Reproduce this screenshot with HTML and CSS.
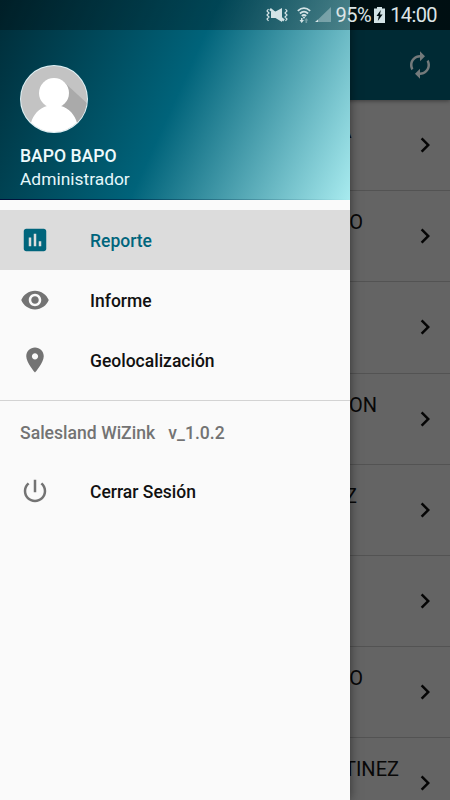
FILE: index.html
```html
<!DOCTYPE html>
<html lang="es">
<head>
<meta charset="utf-8">
<title>Salesland WiZink</title>
<link rel="stylesheet" href="styles.css">
</head>
<body>
<div class="screen">
  <main class="page">
    <header class="appbar">
      <svg class="sync" viewBox="0 0 24 24"><path d="M12 6v3l4-4-4-4v3c-4.42 0-8 3.58-8 8 0 1.57.46 3.03 1.24 4.26L6.7 14.8c-.45-.83-.7-1.79-.7-2.8 0-3.31 2.69-6 6-6zm6.76 1.74L17.3 9.2c.44.84.7 1.79.7 2.8 0 3.31-2.69 6-6 6v-3l-4 4 4 4v-3c4.42 0 8-3.58 8-8 0-1.57-.46-3.03-1.24-4.26z"/></svg>
    </header>
    <ul class="list">
      <li class="row"><span class="name name-a">A</span><svg class="chevron" viewBox="0 0 24 24"><path d="M8.6 16.6 13.2 12 8.6 7.4 10 6l6 6-6 6z"/></svg></li>
      <li class="row"><span class="name name-b">O</span><svg class="chevron" viewBox="0 0 24 24"><path d="M8.6 16.6 13.2 12 8.6 7.4 10 6l6 6-6 6z"/></svg></li>
      <li class="row"><span class="name"></span><svg class="chevron" viewBox="0 0 24 24"><path d="M8.6 16.6 13.2 12 8.6 7.4 10 6l6 6-6 6z"/></svg></li>
      <li class="row"><span class="name name-c">ON</span><svg class="chevron" viewBox="0 0 24 24"><path d="M8.6 16.6 13.2 12 8.6 7.4 10 6l6 6-6 6z"/></svg></li>
      <li class="row"><span class="name name-d">Z</span><svg class="chevron" viewBox="0 0 24 24"><path d="M8.6 16.6 13.2 12 8.6 7.4 10 6l6 6-6 6z"/></svg></li>
      <li class="row"><span class="name"></span><svg class="chevron" viewBox="0 0 24 24"><path d="M8.6 16.6 13.2 12 8.6 7.4 10 6l6 6-6 6z"/></svg></li>
      <li class="row"><span class="name name-b">O</span><svg class="chevron" viewBox="0 0 24 24"><path d="M8.6 16.6 13.2 12 8.6 7.4 10 6l6 6-6 6z"/></svg></li>
      <li class="row"><span class="name name-e">TINEZ</span><svg class="chevron" viewBox="0 0 24 24"><path d="M8.6 16.6 13.2 12 8.6 7.4 10 6l6 6-6 6z"/></svg></li>
    </ul>
  </main>

  <aside class="drawer">
    <header class="profile">
      <svg class="avatar" viewBox="0 0 68 68">
        <defs><clipPath id="disc"><circle cx="34" cy="34" r="33"/></clipPath></defs>
        <circle cx="34" cy="34" r="34" fill="#e2f4f8"/>
        <g clip-path="url(#disc)">
          <rect width="68" height="68" fill="#c3c3c3"/>
          <path d="M45 18 72 43v30H50L40 42z" fill="#aaa"/>
          <circle cx="34" cy="28" r="15" fill="#fff"/>
          <path d="M27 38h14v3c8 2 14 9 16 17v12H11V58c2-8 8-15 16-17z" fill="#fff"/>
        </g>
      </svg>
      <div class="user">BAPO BAPO</div>
      <div class="role">Administrador</div>
    </header>
    <nav class="menu">
      <a class="item active"><svg class="icon" viewBox="0 0 24 24"><path d="M19 3H5c-1.100 0-2 .9-2 2v14c0 1.100.9 2 2 2h14c1.100 0 2-.9 2-2V5c0-1.100-.9-2-2-2zM9 17H7v-7h2v7zm4 0h-2V7h2v10zm4 0h-2v-4h2v4z"/></svg><span>Reporte</span></a>
      <a class="item"><svg class="icon" viewBox="0 0 24 24"><path d="M12 4.500C7 4.500 2.730 7.610 1 12c1.730 4.390 6 7.500 11 7.500s9.270-3.110 11-7.500c-1.730-4.390-6-7.500-11-7.500zM12 17c-2.760 0-5-2.240-5-5s2.240-5 5-5 5 2.240 5 5-2.240 5-5 5zm0-8c-1.660 0-3 1.340-3 3s1.340 3 3 3 3-1.340 3-3-1.340-3-3-3z"/></svg><span>Informe</span></a>
      <a class="item"><svg class="icon" viewBox="0 0 24 24"><path d="M12 2C8.130 2 5 5.130 5 9c0 5.250 7 13 7 13s7-7.750 7-13c0-3.870-3.130-7-7-7zm0 9.500c-1.380 0-2.500-1.120-2.500-2.500s1.120-2.500 2.500-2.500 2.500 1.120 2.500 2.500-1.120 2.500-2.500 2.500z"/></svg><span>Geolocalización</span></a>
    </nav>
    <section class="session">
      <div class="version">Salesland WiZink   v_1.0.2</div>
      <a class="item"><svg class="icon" viewBox="0 0 24 24"><path d="M13 3h-2v10h2V3zm4.830 2.170-1.420 1.420C17.990 7.860 19 9.810 19 12c0 3.870-3.130 7-7 7s-7-3.130-7-7c0-2.190 1.010-4.140 2.580-5.420L6.170 5.170C4.230 6.820 3 9.260 3 12c0 4.970 4.030 9 9 9s9-4.030 9-9c0-2.740-1.230-5.180-3.170-6.830z"/></svg><span>Cerrar Sesión</span></a>
    </section>
  </aside>

  <div class="statusbar">
    <svg class="mute" viewBox="0 0 24 16">
      <path d="M6 4.500h4.500L17 1v14l-6.500-4H6z"/>
      <path class="slash" d="m5 2 14 11.500"/>
      <path class="wave" d="M3.500 2 2 4l2 2-2 2 2 2-2 2 1.500 2M20.500 2 22 4l-2 2 2 2-2 2 2 2-1.500 2"/>
    </svg>
    <svg class="wifi" viewBox="0 0 14 16">
      <path class="arc" d="M.8 3.800q6.200-5.400 12.400 0M2.900 6.500q4.100-3.700 8.200 0M4.800 9q2.200-2 4.400 0"/>
      <circle cx="7" cy="10.500" r="1"/>
      <path d="M4 11h1.500v2H7l-2.300 3-2.200-3H4z"/><path class="dim" d="M8.500 16v-2.500H7.300L9.300 11l2 2.500h-1.200V16z"/>
    </svg>
    <svg class="signal" viewBox="0 0 16 16"><path class="dim" d="M16 0v15H3v-2.500z"/><path d="M3 12.500V15H0z"/></svg>
    <span class="percent">95%</span>
    <svg class="battery" viewBox="0 0 11 16"><path fill-rule="evenodd" d="M3 0h5v1.500h3V16H0V1.500h3zM6.800 3 2.500 9h2.300L3.800 14l4.800-6.500H6z"/></svg>
    <span class="clock">14:00</span>
  </div>
</div>
</body>
</html>
```

FILE: styles.css
```css
* { box-sizing: border-box; }

body {
  margin: 0;
  font-family: Roboto, "Liberation Sans", sans-serif;
}

.screen {
  position: relative;
  width: 450px;
  height: 800px;
  overflow: hidden;
  background: #646464;
}

.page { height: 800px; overflow: hidden; }

.appbar {
  position: relative;
  display: flex;
  align-items: center;
  justify-content: flex-end;
  height: 100px;
  padding: 30px 15px 0 0;
  background: #002a34;
  box-shadow: 0 1px 4px rgba(0, 0, 0, 0.4);
}

.sync { width: 30px; height: 30px; fill: #747a7b; }

.list { margin: 0; padding: 0; list-style: none; }

.row {
  display: flex;
  align-items: center;
  justify-content: space-between;
  height: 91.200px;
  padding-right: 10px;
  border-bottom: 1px solid #535353;
}

.name {
  width: 400px;
  height: 52px;
  color: #080808;
  font-size: 20px;
  line-height: 25px;
  text-align: right;
}

.name-a { padding-right: 48.500px; line-height: 24px; }
.name-b { padding-right: 37px; }
.name-c { padding-right: 23px; }
.name-d { padding-right: 43px; }
.name-e { padding-right: 1px; }

.chevron { flex: none; width: 30px; height: 30px; fill: #050505; }

.drawer {
  position: absolute;
  top: 0;
  left: 0;
  width: 350px;
  height: 800px;
  background: #fafafa;
  box-shadow: 0 0 10px rgba(0, 0, 0, 0.5);
}

.profile {
  height: 200px;
  padding: 65px 20px 0;
  background:
    linear-gradient(90deg, #00103a, rgba(0, 40, 70, 0.4) 50%, transparent) bottom / 100% 1px no-repeat,
    linear-gradient(114.500deg, #002c38 0%, #00637a 50%, #a8ebef 100%);
}

.avatar { display: block; width: 68px; height: 68px; }

.user {
  margin-top: 10.500px;
  color: #eefafc;
  font-size: 17.600px;
  font-weight: 500;
  line-height: 24px;
}

.role { color: #e5f7fa; font-size: 17.400px; line-height: 23px; }

.menu { padding: 10px 0; }

.item {
  display: flex;
  align-items: center;
  gap: 40px;
  height: 60px;
  padding: 1px 20px 0;
  color: #111;
  font-size: 17.500px;
  font-weight: 500;
}

.icon { width: 30px; height: 30px; margin-top: -1px; fill: #737373; }

.active { color: #00657c; background: #dcdcdc; }
.active .icon { fill: #00657c; }

.session { border-top: 1px solid #d3d3d3; }

.version {
  height: 60px;
  padding: 1px 20px 0;
  color: #737373;
  font-size: 17.600px;
  font-weight: 500;
  line-height: 62px;
  white-space: pre;
}

.statusbar {
  position: absolute;
  top: 0;
  left: 0;
  display: flex;
  align-items: center;
  justify-content: flex-end;
  width: 450px;
  height: 30px;
  padding-right: 13px;
  background: linear-gradient(90deg, rgba(0, 0, 0, 0.3) 350px, rgba(0, 0, 0, 0.65) 350px);
  color: #dce4e6;
  fill: #d3e3e6;
  font-size: 20px;
}

.mute { width: 24px; height: 16px; margin-right: 8px; }
.slash { stroke: #d3e3e6; stroke-width: 2.500; }
.wave { fill: none; stroke: #d3e3e6; stroke-width: 1.200; }
.wifi { width: 14px; height: 16px; margin-right: 4px; }
.arc { fill: none; stroke: #d3e3e6; stroke-width: 1.700; }
.dim { opacity: 0.4; }
.signal { width: 16px; height: 16px; margin-right: 5px; }
.percent { margin-right: 3px; letter-spacing: -0.500px; }
.battery { width: 11px; height: 16px; margin-right: 5px; }
.clock { letter-spacing: -0.600px; }
```
